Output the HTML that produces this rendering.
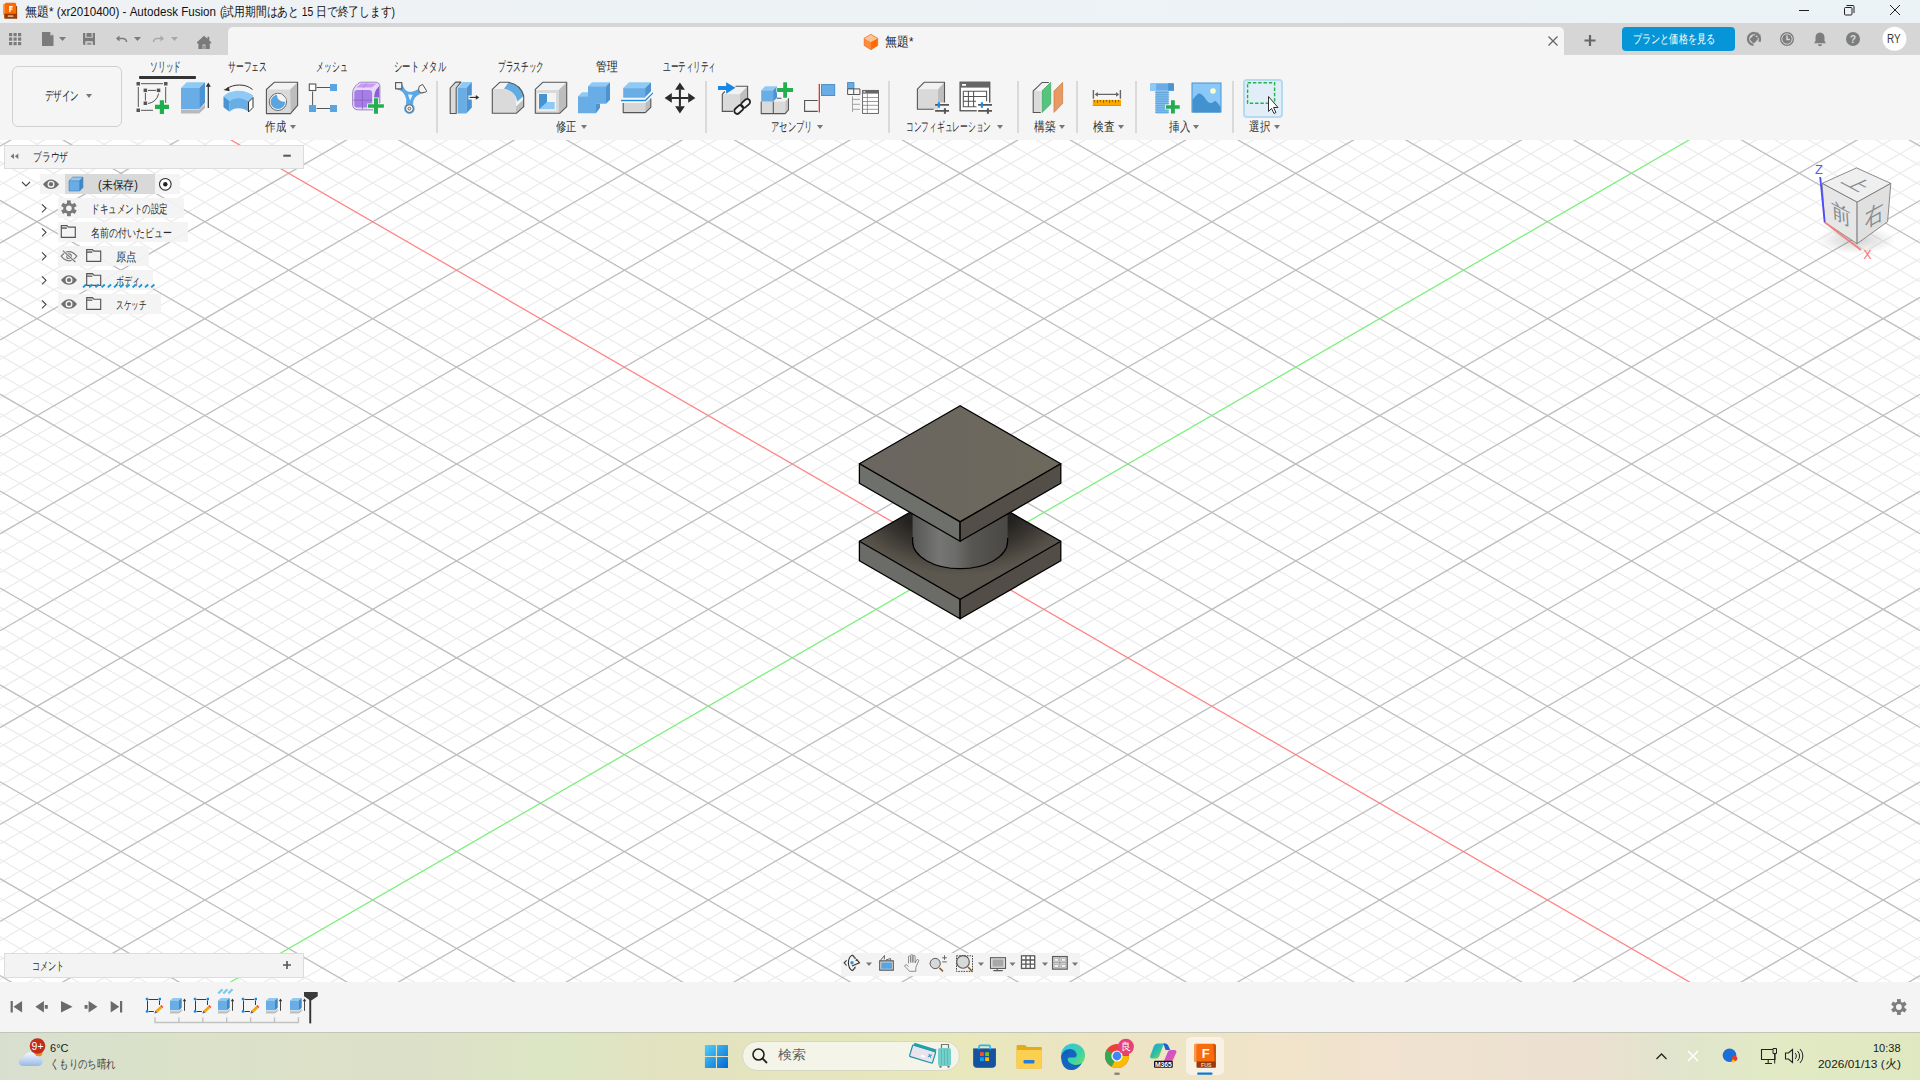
<!DOCTYPE html>
<html><head><meta charset="utf-8">
<style>
*{box-sizing:border-box;margin:0;padding:0}
html,body{width:1920px;height:1080px;overflow:hidden;background:#fff;font-family:"Liberation Sans",sans-serif;color:#3c3c3c}
.a{position:absolute}
.t{position:absolute;white-space:nowrap;font-size:12px;line-height:14px;transform-origin:0 50%}
svg{position:absolute;overflow:visible}
#title{left:0;top:0;width:1920px;height:23px;background:linear-gradient(90deg,#eff2f5,#ebf3f6)}
#qab{left:0;top:23px;width:1920px;height:32px;background:#d6d6d6}
#doctab{left:228px;top:27px;width:1336px;height:28px;background:#f5f5f5;border-radius:5px 5px 0 0}
#toolbar{left:0;top:55px;width:1920px;height:85px;background:#f5f5f5}
#viewport{left:0;top:140px;width:1920px;height:842px;background:#fff;overflow:hidden}
#timeline{left:0;top:982px;width:1920px;height:50px;background:#f4f4f4}
#taskbar{left:0;top:1032px;width:1920px;height:48px;background:linear-gradient(90deg,#d8dfcf 0%,#dbe2c8 10%,#dde0c8 22%,#dce6c4 29%,#e2e2c0 34%,#e8e8bc 50%,#ece4c4 58%,#f0e4c8 65%,#f0e2d0 73%,#ebe0d0 83%,#e0e5cc 87.5%,#e2eac4 93%,#dfe8c0 100%);border-top:1px solid #c3c6b6}
.sep{position:absolute;top:81px;width:2px;height:52px;background:#dadada}
.tri{position:absolute;width:0;height:0;border-left:3px solid transparent;border-right:3px solid transparent;border-top:4px solid #777}
</style></head><body>
<!-- TITLE BAR -->
<div id="title" class="a">
  <svg style="left:0;top:0" width="24" height="23">
    <path d="M3 5a1.2 1.2 0 0 1 1.2-1.2H5v11H3z" fill="#ff9447"/>
    <path d="M16 5.8h0.3a0.8 0.8 0 0 1 0.8 0.8V18.7H16z" fill="#a64606"/>
    <path d="M4.9 4a1.2 1.2 0 0 1 1.2-1.2h8.7a1.2 1.2 0 0 1 1.2 1.2v9.9H4.9z" fill="#ff6a00"/>
    <path d="M4.2 13.8h12.9v4a0.9 0.9 0 0 1-0.9 0.9H5.1a0.9 0.9 0 0 1-0.9-0.9z" fill="#983c06"/>
    <path d="M9.2 12V6.1h3.6v1.3h-2.2v1.1h1.9v1.2h-1.9V12z" fill="#fff"/>
    <rect x="7.8" y="15.3" width="5.6" height="1.8" rx="0.6" fill="#d9a88a"/>
  </svg>
  <div class="t" style="left:25px;top:4.5px;color:#111;font-size:12.5px;transform:scaleX(0.9273)">無題* (xr2010400) - Autodesk Fusion</div>
  <div class="t" style="left:220px;top:4.5px;color:#111;font-size:12.5px;transform:scaleX(0.8286)">(試用期間はあと 15 日で終了します)</div>
  <svg style="left:1790px;top:0" width="130" height="23">
    <line x1="1799" y1="10.5" x2="1809" y2="10.5" stroke="#222" stroke-width="1" transform="translate(-1790,0)"/>
    <g transform="translate(-1790,0)" fill="none" stroke="#222" stroke-width="1">
      <rect x="1844.5" y="7.5" width="7.5" height="7.5" rx="1"/>
      <path d="M1846.5 5.5h6.5a1 1 0 0 1 1 1v6.5"/>
      <path d="M1890 5L1900 15M1900 5L1890 15"/>
    </g>
  </svg>
</div>
<!-- QUICK ACCESS BAR -->
<div id="qab" class="a"></div>
<svg style="left:0;top:0" width="230" height="56">
  <g fill="#7b7b7b">
    <rect x="9" y="33" width="3.2" height="3.2"/><rect x="13.5" y="33" width="3.2" height="3.2"/><rect x="18" y="33" width="3.2" height="3.2"/>
    <rect x="9" y="37.5" width="3.2" height="3.2"/><rect x="13.5" y="37.5" width="3.2" height="3.2"/><rect x="18" y="37.5" width="3.2" height="3.2"/>
    <rect x="9" y="42" width="3.2" height="3.2"/><rect x="13.5" y="42" width="3.2" height="3.2"/><rect x="18" y="42" width="3.2" height="3.2"/>
    <path d="M42 32h8l3.5 3.5V46H42z"/><path d="M50.3 32.3v2.9h2.9z" fill="#d6d6d6"/>
    <path d="M59 37h7l-3.5 4z"/>
    <path d="M83 33h12v12H84l-1-1z M85.2 33v4.8h7.6V33z M85.3 41.2v3.8h7.5v-3.8z" fill-rule="evenodd"/><rect x="85.2" y="33" width="7.6" height="4.8" fill="#b8b8b8"/><rect x="86.8" y="33" width="4.6" height="3.8" fill="#7b7b7b"/><rect x="85.6" y="41.4" width="7" height="3.6" rx="1" fill="#c4c4c4"/><rect x="87.5" y="43" width="3.5" height="1.6" fill="#8a8a8a"/>
    <path d="M134 37h7l-3.5 4z"/>
  </g>
  <g fill="none" stroke="#7b7b7b" stroke-width="1.6">
    <path d="M117 38.5h6a3.5 3.5 0 0 1 3.5 3.5"/>
  </g>
  <path d="M116 38.5l3.5-3v6z" fill="#7b7b7b"/>
  <g fill="none" stroke="#a8a8a8" stroke-width="1.6">
    <path d="M163 38.5h-6a3.5 3.5 0 0 0-3.5 3.5"/>
  </g>
  <path d="M164 38.5l-3.5-3v6z" fill="#a8a8a8"/>
  <path d="M171 37h7l-3.5 4z" fill="#a8a8a8"/>
  <path d="M204 35.8l3.5 3v-2h1.8v3.6l2.2 2.1-0.8 1h-0.9V49h-11.4v-5.5h-0.9l-0.8-1z M202.6 49v-4.6h2.8V49z" fill="#7b7b7b" fill-rule="evenodd"/><rect x="203.2" y="45.5" width="1.6" height="3.5" fill="#8a8a8a"/>
</svg>
<div id="doctab" class="a"></div>
<svg style="left:0;top:0" width="900" height="56">
  <path d="M864.2 38.2L870.9 34.3L877.7 38.2L871 42Z" fill="#fdc394"/>
  <path d="M864.2 38.2L871 42V49.7L864.2 45.6Z" fill="#ff8a3a"/>
  <path d="M871 42L877.7 38.2V45.6L871 49.7Z" fill="#ff6b00"/>
  <path d="M864.2 38.2L870.9 34.3L877.7 38.2V45.6L871 49.7L864.2 45.6Z" fill="none" stroke="#e86a1e" stroke-width="0.7"/>
</svg>
<div class="t" style="left:884.5px;top:35px;color:#222;font-size:12.5px;transform:scaleX(0.9231)">無題*</div>
<svg style="left:0;top:0" width="1920" height="56">
  <path d="M1548.5 36.5l9 9M1557.5 36.5l-9 9" stroke="#666" stroke-width="1.3" fill="none"/>
  <path d="M1590 35v11M1584.5 40.5h11" stroke="#666" stroke-width="2.2" fill="none"/>
  <rect x="1622" y="27" width="113" height="24" rx="4" fill="#0696d7"/>
  <circle cx="1754" cy="39" r="6" fill="none" stroke="#7d7d7d" stroke-width="2.3" stroke-dasharray="30 8" transform="rotate(95 1754 39)"/>
  <g transform="rotate(45 1754 39)" fill="#7d7d7d"><rect x="1751" y="36" width="6" height="6.5" rx="1"/><rect x="1751.8" y="31.5" width="1.5" height="4.5"/><rect x="1754.7" y="31.5" width="1.5" height="4.5"/></g>
  <g fill="#7d7d7d">
    <circle cx="1787" cy="39" r="7"/>
    <path d="M1820 32.5c-3 0-4.5 2.2-4.5 5v3.5l-1.5 2.2h12l-1.5-2.2v-3.5c0-2.8-1.5-5-4.5-5z M1818 44.3h4a2 2 0 0 1-4 0z"/>
    <circle cx="1853" cy="39" r="7"/>
  </g>
    <circle cx="1787" cy="39" r="5.2" fill="none" stroke="#d6d6d6" stroke-width="1"/>
  <path d="M1787 35.5v4h3" stroke="#d6d6d6" stroke-width="1.5" fill="none"/>
  <text x="1853" y="43" font-size="10.5" font-weight="bold" fill="#d6d6d6" text-anchor="middle" font-family="Liberation Sans">?</text>
  <circle cx="1894.5" cy="38.7" r="12" fill="#fff"/>
</svg>
<div class="t" style="left:1633px;top:32px;color:#fff;transform:scaleX(0.7593)">プランと価格を見る</div>
<div class="t" style="left:1886.6px;top:32.2px;color:#3a3a3a;font-size:12px;transform:scaleX(0.8266)">RY</div>
<!-- TOOLBAR -->
<div id="toolbar" class="a"></div>
<div class="a" style="left:12px;top:65.5px;width:109.5px;height:61px;border:1.5px solid #d0d0d0;border-radius:6px"></div>
<div class="t" style="left:45px;top:88.5px;color:#1e1e1e;font-size:12.5px;transform:scaleX(0.6538)">デザイン</div>
<div class="tri" style="left:86px;top:94px"></div>
<!-- tab labels -->
<div class="t" style="left:150px;top:59.8px;color:#262626;font-size:12.5px;transform:scaleX(0.5962)">ソリッド</div>
<div class="t" style="left:228px;top:59.8px;color:#262626;font-size:12.5px;transform:scaleX(0.6000)">サーフェス</div>
<div class="t" style="left:315.5px;top:59.8px;color:#262626;font-size:12.5px;transform:scaleX(0.6058)">メッシュ</div>
<div class="t" style="left:394px;top:59.8px;color:#262626;font-size:12.5px;transform:scaleX(0.6382)">シート メタル</div>
<div class="t" style="left:497.5px;top:59.8px;color:#262626;font-size:12.5px;transform:scaleX(0.5897)">プラスチック</div>
<div class="t" style="left:595.5px;top:59.8px;color:#262626;font-size:12.5px;transform:scaleX(0.8269)">管理</div>
<div class="t" style="left:663px;top:59.8px;color:#262626;font-size:12.5px;transform:scaleX(0.5824)">ユーティリティ</div>
<div class="a" style="left:138.5px;top:75.5px;width:57px;height:3px;background:#333;border-radius:1px"></div>
<!-- group labels -->
<div class="t" style="left:264.5px;top:119.5px;color:#333;font-size:12.5px;transform:scaleX(0.8077)">作成</div>
<div class="tri" style="left:289.5px;top:125px"></div>
<div class="t" style="left:555.5px;top:119.5px;color:#333;font-size:12.5px;transform:scaleX(0.7885)">修正</div>
<div class="tri" style="left:580.5px;top:125px"></div>
<div class="t" style="left:771px;top:119.5px;color:#333;font-size:12.5px;transform:scaleX(0.6385)">アセンブリ</div>
<div class="tri" style="left:816.5px;top:125px"></div>
<div class="t" style="left:906px;top:119.5px;color:#333;font-size:12.5px;transform:scaleX(0.5944)">コンフィギュレーション</div>
<div class="tri" style="left:997px;top:125px"></div>
<div class="t" style="left:1033.5px;top:119.5px;color:#333;font-size:12.5px;transform:scaleX(0.8269)">構築</div>
<div class="tri" style="left:1059px;top:125px"></div>
<div class="t" style="left:1092.5px;top:119.5px;color:#333;font-size:12.5px;transform:scaleX(0.8269)">検査</div>
<div class="tri" style="left:1117.5px;top:125px"></div>
<div class="t" style="left:1168.5px;top:119.5px;color:#333;font-size:12.5px;transform:scaleX(0.8077)">挿入</div>
<div class="tri" style="left:1192.5px;top:125px"></div>
<div class="t" style="left:1248.5px;top:119.5px;color:#333;font-size:12.5px;transform:scaleX(0.8077)">選択</div>
<div class="tri" style="left:1273.5px;top:125px"></div>
<div class="sep" style="left:436px"></div>
<div class="sep" style="left:705px"></div>
<div class="sep" style="left:888px"></div>
<div class="sep" style="left:1017px"></div>
<div class="sep" style="left:1076px"></div>
<div class="sep" style="left:1135px"></div>
<div class="sep" style="left:1232px"></div>
<div class="a" style="left:1243px;top:78.5px;width:40px;height:39px;background:#e1eef7;border:2px solid #b5daf1;border-radius:4px"></div>
<svg style="left:0;top:0" width="1920" height="140">
 <defs>
  <linearGradient id="bl" x1="0" y1="0" x2="0" y2="1"><stop offset="0" stop-color="#6cb2e8"/><stop offset="1" stop-color="#5aa5e0"/></linearGradient>
 </defs>
 <!-- sketch -->
 <g fill="#555">
  <rect x="136.5" y="82" width="3.5" height="3.5"/><rect x="164" y="82" width="3.5" height="3.5"/><rect x="136.5" y="108.5" width="3.5" height="3.5"/>
  <rect x="143.6" y="88.6" width="3.5" height="3.5"/><rect x="156.8" y="88.6" width="3.5" height="3.5"/><rect x="143.6" y="101.5" width="3.5" height="3.5"/>
 </g>
 <g stroke="#555" stroke-width="1" fill="none">
  <path d="M141 83.7h22M138.3 87v20M165.7 87v16M141 110.3h12M145.4 93v7.5M148 90.4h8M158.6 93.5a12 12 0 0 1-10.5 10"/>
 </g>
 <path d="M159.8 100.2h4.2v4.55h5v4.2h-5v5h-4.2v-5h-4.8v-4.2h4.8z" fill="#1fae4b"/>
 <!-- extrude -->
 <path d="M181 88l5.6-5.8h18.4L199.2 88z" fill="#8fcaf6"/>
 <path d="M181 88h18.2v21H181z" fill="#68ade6"/>
 <path d="M199.2 88l5.8-5.8v20.5l-5.8 6.3z" fill="#4b93d1"/>
 <path d="M181 109.5h18.2l5.8-5.5v4l-5.8 5.5H181z" fill="#b9b9b9"/>
 <path d="M208.3 84v24" stroke="#333" stroke-width="1.2"/><path d="M208.3 82.5l-2.6 4.2h5.2z" fill="#333"/>
 <!-- revolve -->
 <path d="M223.5 96.5c3-3.5 9-5.7 15-5.7s11.5 2 15 5l-5 8c-2.5-2-6-3-10-3s-7.5 1-10 3z" fill="#8fcaf6"/>
 <path d="M223.5 96.5l6 4.8v10.5l-6-4.5z" fill="#4b93d1"/>
 <path d="M229.5 101.3c2.5-2 6-3 9-3s6.5 1 9.5 3v10c-3-2-6-3-9.5-3s-6.5 1-9 3.5z" fill="#68ade6"/>
 <path d="M248.5 102l4.5-4.5v10l-4.5 4.5z" fill="#fff" stroke="#333" stroke-width="1"/>
 <path d="M252.5 89.5c-3.5-3-8-4.5-13-4.5s-9 1.3-12.5 3.5" stroke="#333" stroke-width="1" fill="none"/>
 <path d="M223.5 90l5.5-3.2 0.5 4.5z" fill="#333"/>
 <!-- hole -->
 <clipPath id="holeclip"><circle cx="277.9" cy="101.9" r="8.2"/></clipPath>
 <path d="M266.4 89.5L274.2 82.3H297.6L290.1 89.5Z" fill="#f3f3f3"/>
 <path d="M266.4 89.5H290.1V113.6H266.4Z" fill="#d9d9d9"/>
 <path d="M290.1 89.5L297.6 82.3V105.4L290.5 113.6Z" fill="#bdbdbd"/>
 <path d="M266.4 89.5L274.2 82.3H297.6V105.4L290.5 113.6H266.4Z" fill="none" stroke="#555" stroke-width="1.1" stroke-linejoin="round"/>
 <circle cx="277.9" cy="101.9" r="8.6" fill="#f4f4f4" stroke="#5a5a5a" stroke-width="0.9"/>
 <g clip-path="url(#holeclip)">
  <circle cx="277.9" cy="101.9" r="7.2" fill="#5aa5e0"/>
  <circle cx="283.6" cy="95.2" r="6.6" fill="#f4f4f4"/>
 </g>
 <!-- rect pattern -->
 <path d="M316.5 87.5h13.5M312.6 91.5v13.5M316.5 108.5h13.5" stroke="#555" stroke-width="1"/>
 <rect x="309.3" y="84" width="6.5" height="6.5" fill="#fff" stroke="#555" stroke-width="1.1"/>
 <rect x="330" y="84" width="7" height="7" fill="#5aa5e0"/>
 <rect x="309" y="105" width="7" height="7" fill="#5aa5e0"/>
 <rect x="330" y="105" width="7" height="7" fill="#5aa5e0"/>
 <!-- form -->
 <path d="M352.6 93Q352.6 89 355.5 86L358 83.5Q359.3 82.2 361.5 82.2H375.5Q379.9 82.2 379.9 87V103L375 109.9H358.5Q352.6 109.9 352.6 104Z" fill="#e6d9fb" stroke="#7d5fa8" stroke-width="0.7"/>
 <path d="M356.5 87.6L360.8 83.4H376.8L371.8 87.6Z" fill="#c89cf6"/>
 <path d="M366.8 83.4L363.2 87.6" stroke="#9b78cf" stroke-width="0.7"/>
 <path d="M374.2 96.5Q374.2 92 376.5 89.2L379.2 86V103L377 105.8H374.2Z" fill="#8b5fd0"/>
 <rect x="354.3" y="89.9" width="17.8" height="17.7" rx="3.2" fill="#a77de6"/>
 <path d="M362.4 89.9V109.5M353.2 100.2H372.1" stroke="#8862c4" stroke-width="0.8"/>
 <path d="M373.9 98.2h4.1v6.1h5.9v3.5h-5.9v5.9h-4.1v-5.9h-5.9v-3.5h5.9z" fill="#fbf7ff" stroke="#fbf7ff" stroke-width="1.6"/><path d="M373.9 98.2h4.1v6.1h5.9v3.5h-5.9v5.9h-4.1v-5.9h-5.9v-3.5h5.9z" fill="#22b04c"/>
 <!-- derive -->
 <path d="M396 89.2Q404.5 90 406.3 99.5L406 105H413Q412.5 97 420.5 93.8L423.5 93.2L420.2 87.5Q417 90.5 410.5 92Q404.5 92 402.2 83.8L401.6 88.6Z" fill="#5aa9e6"/>
 <path d="M408 94.6L412.6 94.8L410.1 100.6Z" fill="#f4f4f4"/>
 <circle cx="409.4" cy="108.6" r="5.3" fill="#5aa9e6"/>
 <circle cx="409.4" cy="108.6" r="3.9" fill="#f4f4f4" stroke="#555" stroke-width="0.9"/>
 <circle cx="409.4" cy="108.6" r="1.4" fill="none" stroke="#555" stroke-width="0.9"/>
 <path d="M419.2 86.3L422.6 84.4L426.6 90.8Q426.8 91.6 426 92L421.5 92.8Q418.5 92.5 418.6 89.2Z" fill="#f4f4f4" stroke="#555" stroke-width="1"/>
 <rect x="395.6" y="82.6" width="6.2" height="6.2" fill="#f4f4f4" stroke="#555" stroke-width="1.1"/>
 <!-- press pull -->
 <path d="M450.2 88L455.6 82.1H461L456.2 88V113.5H450.2Z" fill="#dadada" stroke="#555" stroke-width="1.1" stroke-linejoin="round"/>
 <path d="M457.6 88L462.8 82.1H471.8L466.4 88Z" fill="#8fcaf6"/>
 <path d="M457.6 88H466.4V113.5H457.6Z" fill="#68ade6"/>
 <path d="M466.4 88L471.8 82.1V107.5L466.4 113.5Z" fill="#4b93d1"/>
 <rect x="468.5" y="95.5" width="6" height="4" fill="#fff"/>
 <path d="M469.5 97.4h7" stroke="#333" stroke-width="1.2"/><path d="M479.3 97.4l-3.5-2.3v4.6z" fill="#333"/>
 <!-- fillet -->
 <path d="M492.3 89.3L499.7 82.3H508.7L504 88.7H492.3Z" fill="#f3f3f3"/>
 <path d="M492.3 89H504Q516 90 516 102.5V113.3H492.3Z" fill="#dadada"/>
 <path d="M516 106.5L523.7 99.5V106.7L516.3 113.3H516Z" fill="#c0c0c0"/>
 <path d="M508.7 82.3Q521 85 523.7 96L517.3 101.5Q515.5 91 504 88.7Z" fill="#62ace4"/>
 <path d="M492.3 89.3L499.7 82.3H508.7Q521 85 523.7 96V106.7L516.3 113.3H492.3Z" fill="none" stroke="#555" stroke-width="1.1" stroke-linejoin="round"/>
 <!-- shell -->
 <path d="M535.3 89.3L542.7 82.3H566.7L558.7 90Z" fill="#f2f2f2"/>
 <path d="M535.3 90H558.7V113.3H535.3Z" fill="#d9d9d9"/>
 <path d="M558.7 90L566.7 82.3V106.7L559.7 113.3H558.7Z" fill="#bdbdbd"/>
 <path d="M535.3 89.3L542.7 82.3H566.7V106.7L559.7 113.3H535.3Z" fill="none" stroke="#555" stroke-width="1.1" stroke-linejoin="round"/>
 <rect x="537.3" y="93" width="18.7" height="17.7" fill="#f4f4f4"/>
 <path d="M539 94H547V102H554.7V109.3H539Z" fill="#8fcaf6"/>
 <path d="M539 94H547V102L539 109.3Z" fill="#4593d0"/>
 <!-- combine -->
 <path d="M588 86.3L592 82.3H610L606 86.3Z" fill="#8fcaf6"/>
 <path d="M588 86.3H606V103.7H596V104.3H588Z" fill="#68ade6"/>
 <path d="M606 86.3L610 82.3V99.7L606 103.7Z" fill="#4b93d1"/>
 <path d="M578 96.3L582 92.3H588V96.3Z" fill="#8fcaf6"/>
 <path d="M578 96.3H588V103.7H596V113.3H578Z" fill="#68ade6"/>
 <path d="M596 103.7H600V107.7L596 113.3Z" fill="#4b93d1"/>
 <!-- split -->
 <path d="M623.2 88.1L629.1 82.2H651L645.1 88.1Z" fill="#8fcaf6"/>
 <path d="M623.2 88.1H645.1V97.7H623.2Z" fill="#68ade6"/>
 <path d="M645.1 88.1L651 82.2V91.2L644.5 97.7H645.1Z" fill="#4b93d1"/>
 <path d="M621 100.5H645.3L653 92.9" fill="none" stroke="#fff" stroke-width="2.6"/>
 <path d="M621 100.5H645.3L653 92.9" fill="none" stroke="#1e8ae0" stroke-width="1.3"/>
 <path d="M623.2 103H645.3V112.6H623.2Z" fill="#d6d6d6"/>
 <path d="M645.3 103L650.8 98.6V107.3L645.3 112.6Z" fill="#bcbcbc"/>
 <path d="M623.2 103V112.6H645.3L650.8 107.3V98.6" fill="none" stroke="#555" stroke-width="1.1" stroke-linejoin="round"/>
 <!-- move -->
 <path d="M679.9 89.5V106.6M671.5 97.9H688.5" stroke="#2b2b2b" stroke-width="2"/>
 <path d="M675.1 89.8L679.9 82.4L684.9 89.8Z M675.1 106.2L679.9 113.4L684.9 106.2Z M664.6 97.9L671.8 93.1V102.7Z M695.4 97.9L688.2 93.1V102.7Z" fill="#2b2b2b"/>
 <!-- assembly: new component -->
 <path d="M722.3 94.1L727 89.5H735.5L740 94.1Z M735.5 86.3H747.6L740 94.1H733Z" fill="#f2f2f2"/>
 <path d="M722.3 94.1H740V111.4H722.3Z" fill="#dadada"/>
 <path d="M740 94.1L747.6 86.3V99L740 107Z" fill="#bfbfbf"/>
 <path d="M724.8 91.5L722.3 94.1V111.4H733M735.5 86.3H747.6V99" fill="none" stroke="#555" stroke-width="1.1"/>
 <path d="M718 86.1H726.1V82.3L735.5 87.8L726.1 93.7V89.9H718Z" fill="#1888e4"/>
 <g transform="translate(742.2 106.4) rotate(-42)">
  <rect x="-10.3" y="-3.6" width="11.5" height="7.2" rx="3.6" fill="#f4f4f4"/>
  <rect x="-1.2" y="-3.6" width="11.5" height="7.2" rx="3.6" fill="#f4f4f4"/>
  <rect x="-9.6" y="-2.9" width="10.1" height="5.8" rx="2.9" fill="none" stroke="#222" stroke-width="1.8"/>
  <rect x="-0.5" y="-2.9" width="10.1" height="5.8" rx="2.9" fill="none" stroke="#222" stroke-width="1.8"/>
 </g>
 <!-- joint -->
 <path d="M773.3 101.5L777 98.2H785.2V101.5Z" fill="#f2f2f2"/>
 <path d="M761.2 101.5H785.2V113.6H761.2Z" fill="#dadada"/>
 <path d="M785.2 101.5L788.5 98.2V109.8L785.2 113.6Z" fill="#c3c3c3"/>
 <path d="M761.2 101.5V113.6H785.2L788.5 109.8V98.2M773.3 101.5V113.6M777 98.2H781.5" fill="none" stroke="#555" stroke-width="1.05"/>
 <path d="M761.2 90.3L765 86.3H777L773.1 90.3Z" fill="#8fcaf6"/>
 <path d="M761.2 90.3H773.1V101.5H761.2Z" fill="#68ade6"/>
 <path d="M773.1 90.3L777 86.3V97.7L773.1 101.5Z" fill="#4b93d1"/>
 <path d="M783.2 82.3h3.8v5.8h6v3.8h-6v5.8h-3.8v-5.8h-6.1v-3.8h6.1z" fill="#fbfbfb" stroke="#fbfbfb" stroke-width="1.4"/>
 <path d="M783.2 82.3h3.8v5.8h6v3.8h-6v5.8h-3.8v-5.8h-6.1v-3.8h6.1z" fill="#22b04c"/>
 <!-- as-built -->
 <path d="M817.8 100.5H804.6V111.4H817.8" fill="none" stroke="#555" stroke-width="1.1"/>
 <path d="M819.3 84.3v27.7" stroke="#d62828" stroke-width="1.2" stroke-linecap="round"/>
 <rect x="821.5" y="84.6" width="13.2" height="10.9" fill="#68ade6" stroke="#4088c8" stroke-width="0.9"/>
 <!-- motion table -->
 <rect x="847.6" y="82.6" width="6.3" height="5.9" fill="#68ade6" stroke="#4088c8" stroke-width="0.9"/>
 <path d="M847.6 88.9h12.3v5.6h-12.3z M853.7 88.9v5.6" fill="none" stroke="#555" stroke-width="1"/>
 <path d="M852.5 96.3v15.7M852.5 99.4h7.5M852.5 104.3h7.5M852.5 109.3h7.5" stroke="#9a9a9a" stroke-width="0.9"/>
 <rect x="862.6" y="90.4" width="15.9" height="23" fill="#fff" stroke="#5a5a5a" stroke-width="0.9"/>
 <rect x="862.6" y="90.2" width="15.9" height="3.4" fill="#666"/>
 <rect x="863.4" y="91.3" width="2" height="1.1" fill="#fff"/>
 <path d="M862.6 97.5h15.9M862.6 101.5h15.9M862.6 105.3h15.9M862.6 109.3h15.9M867.4 93.6v19.8" stroke="#7a7a7a" stroke-width="0.75"/>
 <!-- configuration -->
 <path d="M917.4 89.2L924.1 82.3H944.5L938 89.2Z" fill="#f2f2f2"/>
 <path d="M917.4 89.2H938V109.3H917.4Z" fill="#d9d9d9"/>
 <path d="M938 89.2L944.5 82.3V102.6H938Z" fill="#bebebe"/>
 <path d="M933.7 109.3H917.4V89.2L924.1 82.3H944.5V102.6" fill="none" stroke="#555" stroke-width="1.1" stroke-linejoin="round"/>
 <path d="M935.1 104.9h13.9M935.1 110.9h13.9" stroke="#555" stroke-width="1.8"/>
 <path d="M938.9 102.2v5.6" stroke="#1a8be6" stroke-width="2.1"/>
 <path d="M944.9 108.2v5.6" stroke="#555" stroke-width="2"/>
 <path d="M976.7 110.7H960.2V82.3H989.7V102.6" fill="none" stroke="#555" stroke-width="1.05"/>
 <rect x="960.7" y="82.8" width="28.5" height="27.4" fill="#fff"/>
 <path d="M976.7 110.7H960.2V82.3H989.7V102.6" fill="none" stroke="#555" stroke-width="1.05"/>
 <rect x="960.2" y="82.3" width="29.5" height="5.3" fill="#666"/>
 <rect x="962" y="84" width="4" height="1.8" fill="#fff"/>
 <path d="M963.3 91.2H986.6V101.3M963.3 91.2V106.7H976.5M963.3 96.4H986.6M963.3 101.3H976M968.4 91.2V106.7M973.6 91.2V106.7" fill="none" stroke="#555" stroke-width="1.05"/>
 <path d="M978.1 104.9h13.9M978.1 110.9h13.9" stroke="#555" stroke-width="1.8"/>
 <path d="M981.9 102.2v5.6" stroke="#1a8be6" stroke-width="2.1"/>
 <path d="M987.9 108.2v5.6" stroke="#555" stroke-width="2"/>
 <!-- construct -->
 <path d="M1033.2 91L1042.1 82.4H1048.8L1042.1 90.8Z" fill="#f4f4f4"/>
 <path d="M1033.2 91H1040.8V112.4H1033.2Z" fill="#dadada"/>
 <path d="M1040.8 112.4H1033.2V91L1042.1 82.4H1048.8" fill="none" stroke="#555" stroke-width="1.05"/>
 <path d="M1042.1 90.8L1050.7 82.4V104L1042.1 112.4Z" fill="#55c57e" stroke="#3aa35c" stroke-width="0.7" stroke-linejoin="round"/>
 <path d="M1054 91L1062.6 82.4V103.5L1054 112.4Z" fill="#e89a62" stroke="#c97a42" stroke-width="0.7" stroke-linejoin="round"/>
 <!-- inspect -->
 <path d="M1093.4 90V98.8M1120.4 90V98.8M1096 94.4H1117.8" stroke="#666" stroke-width="1.4"/>
 <path d="M1094.7 94.4L1097.8 92.1V96.75Z M1119.1 94.4L1116 92.1V96.75Z" fill="#666"/>
 <rect x="1092.8" y="99.9" width="28.2" height="6" fill="#f9a800"/>
 <rect x="1092.8" y="105" width="28.2" height="0.9" fill="#e39400"/>
 <path d="M1094.4 100v1.9M1097.5 100v2.9M1100.4 100v1.9M1103.5 100v2.9M1106.4 100v1.9M1109.5 100v2.9M1112.4 100v1.9M1115.5 100v2.9M1118.6 100v1.9" stroke="#7a5a20" stroke-width="0.9"/>
 <!-- insert: bolt -->
 <path d="M1150.1 84.5q0-1.3 1.3-1.3h21.3q1.3 0 1.3 1.3v6.3h-23.9z" fill="#68ade6"/>
 <path d="M1150.1 84.5q0-1.3 1.3-1.3h4.7v7.6h-6z" fill="#8fcaf6"/>
 <path d="M1168.2 83.2h4.5q1.3 0 1.3 1.3v6.3h-5.8z" fill="#4b93d1"/>
 <path d="M1155.6 90.8h13v21.5q0 1.3-1.3 1.3h-10.4q-1.3 0-1.3-1.3z" fill="#7fbdec"/>
 <path d="M1155 92.5h14.1M1155 94.7h14.1M1155 96.9h14.1M1155 99.1h14.1M1155 101.3h14.1M1155 103.5h14.1M1155 105.7h14.1M1155 107.9h14.1M1155 110.1h14.1M1155 112.3h14.1" stroke="#5d9fd6" stroke-width="0.8"/>
 <path d="M1171 100.3h3.8v5h4.9v3.4h-4.9v4.9h-3.8v-4.9h-5v-3.4h5z" fill="#f5f5f5" stroke="#f5f5f5" stroke-width="1.6"/>
 <path d="M1171 100.3h3.8v5h4.9v3.4h-4.9v4.9h-3.8v-4.9h-5v-3.4h5z" fill="#1fae4b"/>
 <!-- insert: image -->
 <rect x="1192" y="83" width="29" height="29" fill="#8ac8f7" stroke="#4a94cf" stroke-width="1"/>
 <path d="M1192.5 100c3-4 5-6.5 7-6.5s4 2.5 6.5 6 4 3.5 5.5 3.5 2-2 3.5-2 3 2.5 5.5 6v5.5h-28z" fill="#4192cf"/>
 <circle cx="1213" cy="91" r="2.8" fill="#fdfbcf"/>
 <!-- select -->
 <rect x="1247.6" y="82.7" width="27" height="20.5" fill="none" stroke="#22b14c" stroke-width="1.4" stroke-dasharray="3.4 1.9"/>
 <path d="M1268.5 96.5v15l3-3 2.5 5 2-1-2.5-5h4.5z" fill="#fff" stroke="#333" stroke-width="1"/>
</svg>
<!-- VIEWPORT -->
<div id="viewport" class="a">
<svg width="1920" height="842" viewBox="0 140 1920 842" style="left:0;top:0">
 <defs>
  <radialGradient id="bpg" gradientUnits="userSpaceOnUse" cx="960" cy="503" r="120" gradientTransform="translate(960 503) scale(1 0.6) translate(-960 -503)">
   <stop offset="0.5" stop-color="#242220"/><stop offset="0.68" stop-color="#383531"/><stop offset="0.88" stop-color="#524d45"/><stop offset="1" stop-color="#5d584f"/>
  </radialGradient>
  <linearGradient id="cyl" gradientUnits="userSpaceOnUse" x1="912.6" y1="0" x2="1007.6" y2="0">
   <stop offset="0" stop-color="#565754"/><stop offset="0.28" stop-color="#767774"/><stop offset="0.45" stop-color="#6c6d6a"/><stop offset="0.62" stop-color="#585652"/><stop offset="1" stop-color="#4a4844"/>
  </linearGradient>
  <linearGradient id="tpg" gradientUnits="userSpaceOnUse" x1="860" y1="0" x2="1060" y2="0">
   <stop offset="0" stop-color="#6a6660"/><stop offset="1" stop-color="#6d695c"/>
  </linearGradient>
  <radialGradient id="cubeshadow" cx="0.5" cy="0.5" r="0.5"><stop offset="0" stop-color="#000" stop-opacity="0.18"/><stop offset="1" stop-color="#000" stop-opacity="0"/></radialGradient>
 </defs>
 <path d="M0 -943.03L1920 165.48M0 -923.65L1920 184.86M0 -904.27L1920 204.24M0 -884.89L1920 223.62M0 -846.13L1920 262.38M0 -826.75L1920 281.76M0 -807.37L1920 301.14M0 -787.99L1920 320.52M0 -749.23L1920 359.28M0 -729.85L1920 378.66M0 -710.47L1920 398.04M0 -691.09L1920 417.42M0 -652.33L1920 456.18M0 -632.95L1920 475.56M0 -613.57L1920 494.94M0 -594.19L1920 514.32M0 -555.43L1920 553.08M0 -536.05L1920 572.46M0 -516.67L1920 591.84M0 -497.29L1920 611.22M0 -458.53L1920 649.98M0 -439.15L1920 669.36M0 -419.77L1920 688.74M0 -400.39L1920 708.12M0 -361.63L1920 746.88M0 -342.25L1920 766.26M0 -322.87L1920 785.64M0 -303.49L1920 805.02M0 -264.73L1920 843.78M0 -245.35L1920 863.16M0 -225.97L1920 882.54M0 -206.59L1920 901.92M0 -167.83L1920 940.68M0 -148.45L1920 960.06M0 -129.07L1920 979.44M0 -109.69L1920 998.82M0 -70.93L1920 1037.58M0 -51.55L1920 1056.96M0 -32.17L1920 1076.34M0 -12.79L1920 1095.72M0 25.97L1920 1134.48M0 45.35L1920 1153.86M0 64.73L1920 1173.24M0 84.11L1920 1192.62M0 122.87L1920 1231.38M0 142.25L1920 1250.76M0 161.63L1920 1270.14M0 181.01L1920 1289.52M0 219.77L1920 1328.28M0 239.15L1920 1347.66M0 258.53L1920 1367.04M0 277.91L1920 1386.42M0 316.67L1920 1425.18M0 336.05L1920 1444.56M0 355.43L1920 1463.94M0 374.81L1920 1483.32M0 413.57L1920 1522.08M0 432.95L1920 1541.46M0 452.33L1920 1560.84M0 471.71L1920 1580.22M0 510.47L1920 1618.98M0 529.85L1920 1638.36M0 549.23L1920 1657.74M0 568.61L1920 1677.12M0 607.37L1920 1715.88M0 626.75L1920 1735.26M0 646.13L1920 1754.64M0 665.51L1920 1774.02M0 704.27L1920 1812.78M0 723.65L1920 1832.16M0 743.03L1920 1851.54M0 762.41L1920 1870.92M0 801.17L1920 1909.68M0 820.55L1920 1929.06M0 839.93L1920 1948.44M0 859.31L1920 1967.82M0 898.07L1920 2006.58M0 917.45L1920 2025.96M0 936.83L1920 2045.34M0 956.21L1920 2064.72" stroke="#ececec" stroke-width="1.3" fill="none"/>
 <path d="M0 165.59L1920 -942.92M0 184.97L1920 -923.54M0 204.35L1920 -904.16M0 223.73L1920 -884.78M0 262.49L1920 -846.02M0 281.87L1920 -826.64M0 301.25L1920 -807.26M0 320.63L1920 -787.88M0 359.39L1920 -749.12M0 378.77L1920 -729.74M0 398.15L1920 -710.36M0 417.53L1920 -690.98M0 456.29L1920 -652.22M0 475.67L1920 -632.84M0 495.05L1920 -613.46M0 514.43L1920 -594.08M0 553.19L1920 -555.32M0 572.57L1920 -535.94M0 591.95L1920 -516.56M0 611.33L1920 -497.18M0 650.09L1920 -458.42M0 669.47L1920 -439.04M0 688.85L1920 -419.66M0 708.23L1920 -400.28M0 746.99L1920 -361.52M0 766.37L1920 -342.14M0 785.75L1920 -322.76M0 805.13L1920 -303.38M0 843.89L1920 -264.62M0 863.27L1920 -245.24M0 882.65L1920 -225.86M0 902.03L1920 -206.48M0 940.79L1920 -167.72M0 960.17L1920 -148.34M0 979.55L1920 -128.96M0 998.93L1920 -109.58M0 1037.69L1920 -70.82M0 1057.07L1920 -51.44M0 1076.45L1920 -32.06M0 1095.83L1920 -12.68M0 1134.59L1920 26.08M0 1153.97L1920 45.46M0 1173.35L1920 64.84M0 1192.73L1920 84.22M0 1231.49L1920 122.98M0 1250.87L1920 142.36M0 1270.25L1920 161.74M0 1289.63L1920 181.12M0 1328.39L1920 219.88M0 1347.77L1920 239.26M0 1367.15L1920 258.64M0 1386.53L1920 278.02M0 1425.29L1920 316.78M0 1444.67L1920 336.16M0 1464.05L1920 355.54M0 1483.43L1920 374.92M0 1522.19L1920 413.68M0 1541.57L1920 433.06M0 1560.95L1920 452.44M0 1580.33L1920 471.82M0 1619.09L1920 510.58M0 1638.47L1920 529.96M0 1657.85L1920 549.34M0 1677.23L1920 568.72M0 1715.99L1920 607.48M0 1735.37L1920 626.86M0 1754.75L1920 646.24M0 1774.13L1920 665.62M0 1812.89L1920 704.38M0 1832.27L1920 723.76M0 1851.65L1920 743.14M0 1871.03L1920 762.52M0 1909.79L1920 801.28M0 1929.17L1920 820.66M0 1948.55L1920 840.04M0 1967.93L1920 859.42M0 2006.69L1920 898.18M0 2026.07L1920 917.56M0 2045.45L1920 936.94M0 2064.83L1920 956.32" stroke="#ececec" stroke-width="1.3" fill="none"/>
 <path d="M0 -962.41L1920 146.10M0 -865.51L1920 243.00M0 -768.61L1920 339.90M0 -671.71L1920 436.80M0 -574.81L1920 533.70M0 -477.91L1920 630.60M0 -381.01L1920 727.50M0 -284.11L1920 824.40M0 -187.21L1920 921.30M0 -90.31L1920 1018.20M0 103.49L1920 1212.00M0 200.39L1920 1308.90M0 297.29L1920 1405.80M0 394.19L1920 1502.70M0 491.09L1920 1599.60M0 587.99L1920 1696.50M0 684.89L1920 1793.40M0 781.79L1920 1890.30M0 878.69L1920 1987.20M0 975.59L1920 2084.10" stroke="#bfbfbf" stroke-width="1.35" fill="none"/>
 <path d="M0 146.21L1920 -962.30M0 243.11L1920 -865.40M0 340.01L1920 -768.50M0 436.91L1920 -671.60M0 533.81L1920 -574.70M0 630.71L1920 -477.80M0 727.61L1920 -380.90M0 824.51L1920 -284.00M0 921.41L1920 -187.10M0 1018.31L1920 -90.20M0 1212.11L1920 103.60M0 1309.01L1920 200.50M0 1405.91L1920 297.40M0 1502.81L1920 394.30M0 1599.71L1920 491.20M0 1696.61L1920 588.10M0 1793.51L1920 685.00M0 1890.41L1920 781.90M0 1987.31L1920 878.80M0 2084.21L1920 975.70" stroke="#bfbfbf" stroke-width="1.35" fill="none"/>
 <path d="M0 6.6L1920 1115.1" stroke="#ff8585" stroke-width="1.3" fill="none"/>
 <path d="M0 1115.2L1920 6.6" stroke="#7def7d" stroke-width="1.3" fill="none"/>
 <!-- MODEL -->
 <g stroke="#000" stroke-width="1.3" stroke-linejoin="round">
  <!-- bottom plate -->
  <path d="M859.4 541.3L960.1 483.6L1060.8 541.3L960.1 599.4Z" fill="url(#bpg)" stroke="none"/>
  <path d="M859.4 541.3L960.1 599.4L960.1 618.8L859.4 560.7Z" fill="#6b6c68"/>
  <path d="M960.1 599.4L1060.8 541.3L1060.8 560.7L960.1 618.8Z" fill="#524e47"/>
  <path d="M859.4 541.3L960.1 483.6L1060.8 541.3" fill="none"/>
  <!-- cylinder -->
  <path d="M912.6 480L912.6 541.3A47.5 27.4 0 0 0 1007.6 541.3L1007.6 480Z" fill="url(#cyl)" stroke="none"/>
  <path d="M912.6 537L912.6 541.3A47.5 27.4 0 0 0 1007.6 541.3L1007.6 538" fill="none" stroke-width="1.2"/>
  <!-- top plate -->
  <path d="M859.4 463.8L960.1 405.7L1060.8 463.8L960.1 521.9Z" fill="url(#tpg)"/>
  <path d="M859.4 463.8L960.1 521.9L960.1 541.3L859.4 483.2Z" fill="#6e706c"/>
  <path d="M960.1 521.9L1060.8 463.8L1060.8 483.2L960.1 541.3Z" fill="#534f48"/>
 </g>
 <!-- VIEW CUBE -->
 <ellipse cx="1856" cy="240" rx="40" ry="14" fill="url(#cubeshadow)"/>
 <path d="M1822.1 183.4L1856.5 167.9L1890.8 183.4L1857.1 202.2Z" fill="#efefef" stroke="#707070" stroke-width="0.8"/>
 <path d="M1822.1 183.4L1857.1 202.2L1857.1 243.7L1824.7 222.3Z" fill="#e6e6e6" stroke="#707070" stroke-width="0.8"/>
 <path d="M1857.1 202.2L1890.8 183.4L1887.6 221.7L1857.1 243.7Z" fill="#e0e0e0" stroke="#707070" stroke-width="0.8"/>
 <path d="M1824.7 222.3L1820.2 177" stroke="#4a4aff" stroke-width="1.8"/>
 <path d="M1824.7 222.3L1861 250" stroke="#f28080" stroke-width="1.8"/>
 <text x="1819" y="174" font-size="13" fill="#5a5aff" text-anchor="middle" font-family="Liberation Sans">Z</text>
 <text x="1867.5" y="258.5" font-size="12" fill="#ff6a6a" text-anchor="middle" font-family="Liberation Sans">X</text>
 <text x="18.6" y="26.4" font-size="22" fill="#858b91" text-anchor="middle" font-family="Liberation Sans" transform="matrix(0.875 0.47 -0.86 0.3875 1856.5 167.9)">上</text>
 <text x="20" y="29" font-size="22" fill="#858b91" text-anchor="middle" font-family="Liberation Sans" transform="matrix(0.875 0.47 0.065 0.9725 1822.1 183.4)">前</text>
 <text x="20" y="29" font-size="22" fill="#858b91" text-anchor="middle" font-family="Liberation Sans" transform="matrix(0.8425 -0.47 0 1.0375 1857.1 202.2)">右</text>
</svg>
</div>
<!-- BROWSER PANEL -->
<div class="a" style="left:4px;top:144.5px;width:299.5px;height:24px;background:#f3f3f3;border:1px solid #dcdcdc"></div>
<svg style="left:0;top:0" width="320" height="320">
 <path d="M14 153.5v5.5l-3.5-2.75zM18.3 153.5v5.5l-3.5-2.75z" fill="#777"/>
 <rect x="283.3" y="154.7" width="7.5" height="2" fill="#555"/>
</svg>
<div class="t" style="left:32.5px;top:150px;color:#2a2a2a;transform:scaleX(0.7292)">ブラウザ</div>
<div class="a" style="left:40px;top:174px;width:140px;height:20px;background:rgba(243,243,243,0.92)"></div>
<div class="a" style="left:65px;top:174.2px;width:89.7px;height:19.5px;background:#d9d9d9"></div>
<div class="a" style="left:58px;top:198px;width:126px;height:19.5px;background:rgba(243,243,243,0.92)"></div>
<div class="a" style="left:58px;top:222px;width:129.5px;height:19.5px;background:rgba(243,243,243,0.92)"></div>
<div class="a" style="left:58px;top:246px;width:90.5px;height:19.5px;background:rgba(243,243,243,0.92)"></div>
<div class="a" style="left:58px;top:270px;width:94.5px;height:19.5px;background:rgba(243,243,243,0.92)"></div>
<div class="a" style="left:58px;top:294px;width:103px;height:19.5px;background:rgba(243,243,243,0.92)"></div>
<svg style="left:0;top:0" width="320" height="320">
 <g fill="none" stroke="#444" stroke-width="1.1">
  <path d="M22 182l4 4 4-4"/>
  <path d="M42 204.3l4 4-4 4M42 228.3l4 4-4 4M42 252.3l4 4-4 4M42 276.3l4 4-4 4M42 300.3l4 4-4 4"/>
 </g>
 <!-- eye row1 -->
 <path d="M43 184.2c2.5-3.3 5.2-4.8 8-4.8s5.5 1.5 8 4.8c-2.5 3.3-5.2 4.8-8 4.8s-5.5-1.5-8-4.8z" fill="#6f6f6f"/>
 <circle cx="51" cy="184.2" r="3.5" fill="#f3f3f3"/><circle cx="51" cy="184.2" r="2.1" fill="#6f6f6f"/>
 <path d="M69 180.8L72.8 177.1H82.9L79.6 180.8Z" fill="#8fcaf6"/>
 <path d="M69 180.8H79.6V191H69Z" fill="#68ade6"/>
 <path d="M79.6 180.8L82.9 177.1V187.5L79.6 191Z" fill="#3f88c4"/>
 <path d="M69 180.8L72.8 177.1H82.9V187.5L79.6 191H69Z M69 180.8H79.6V191 M79.6 180.8L82.9 177.1" fill="none" stroke="#3a7fc0" stroke-width="0.6"/>
 <circle cx="165.3" cy="184.3" r="5.8" fill="#fff" stroke="#333" stroke-width="1.1"/>
 <circle cx="165.3" cy="184.3" r="2.2" fill="#222"/>
 <!-- gear row2 -->
 <g transform="translate(68.9 208.3)">
  <circle r="5.5" fill="#7a7a7a"/>
  <g fill="#7a7a7a"><rect x="-1.9" y="-7.9" width="3.8" height="15.8"/><rect x="-1.9" y="-7.9" width="3.8" height="15.8" transform="rotate(60)"/><rect x="-1.9" y="-7.9" width="3.8" height="15.8" transform="rotate(120)"/></g>
  <circle r="2.8" fill="#f3f3f3"/>
 </g>
 <!-- folders -->
 <path d="M61.3 228.1h5.6v-2.6h-5.6z" fill="#cfcfcf"/>
 <path d="M61.3 225.5h5.6l1.6 1.6h6.8v10.2h-14z M61.3 228.1h5.6" fill="none" stroke="#555" stroke-width="1.15"/>
 <path d="M86.7 252.1h5.6v-2.6h-5.6z" fill="#cfcfcf"/>
 <path d="M86.7 249.5h5.6l1.6 1.6h6.8v10.2h-14z M86.7 252.1h5.6" fill="none" stroke="#555" stroke-width="1.15"/>
 <path d="M86.7 276.20000000000005h5.6v-2.6h-5.6z" fill="#cfcfcf"/>
 <path d="M86.7 273.6h5.6l1.6 1.6h6.8v10.2h-14z M86.7 276.20000000000005h5.6" fill="none" stroke="#555" stroke-width="1.15"/>
 <path d="M86.7 300.20000000000005h5.6v-2.6h-5.6z" fill="#cfcfcf"/>
 <path d="M86.7 297.6h5.6l1.6 1.6h6.8v10.2h-14z M86.7 300.20000000000005h5.6" fill="none" stroke="#555" stroke-width="1.15"/>
 <!-- eye-slash row4 -->
 <path d="M61.2 256.2c2.5-3.2 5.1-4.6 7.8-4.6s5.3 1.4 7.8 4.6c-2.5 3.2-5.1 4.6-7.8 4.6s-5.3-1.4-7.8-4.6z" fill="none" stroke="#7a7a7a" stroke-width="1.2"/>
 <circle cx="69" cy="256.2" r="2.3" fill="none" stroke="#7a7a7a" stroke-width="1.2"/>
 <path d="M62.8 250.6l12.6 11.4" stroke="#f3f3f3" stroke-width="2.4"/>
 <path d="M62.8 250.6l12.6 11.4" stroke="#7a7a7a" stroke-width="1.2"/>
 <!-- eyes rows5,6 -->
 <path d="M61 280c2.5-3.3 5.2-4.8 8-4.8s5.5 1.5 8 4.8c-2.5 3.3-5.2 4.8-8 4.8s-5.5-1.5-8-4.8z" fill="#6f6f6f"/>
 <circle cx="69" cy="280" r="3.5" fill="#f3f3f3"/><circle cx="69" cy="280" r="2.1" fill="#6f6f6f"/>
 <path d="M61 304c2.5-3.3 5.2-4.8 8-4.8s5.5 1.5 8 4.8c-2.5 3.3-5.2 4.8-8 4.8s-5.5-1.5-8-4.8z" fill="#6f6f6f"/>
 <circle cx="69" cy="304" r="3.5" fill="#f3f3f3"/><circle cx="69" cy="304" r="2.1" fill="#6f6f6f"/>
 <!-- wavy underline -->
 <path d="M83.0 287.4l3.2-2.9M89.2 287.4l3.2-2.9M95.4 287.4l3.2-2.9M101.6 287.4l3.2-2.9M107.8 287.4l3.2-2.9M114.0 287.4l3.2-2.9M120.2 287.4l3.2-2.9M126.4 287.4l3.2-2.9M132.6 287.4l3.2-2.9M138.8 287.4l3.2-2.9M145.0 287.4l3.2-2.9M151.2 287.4l3.2-2.9" fill="none" stroke="#1a96d8" stroke-width="1.9"/>
</svg>
<div class="t" style="left:98.3px;top:177.5px;color:#222;transform:scaleX(0.9091)">(未保存)</div>
<div class="t" style="left:91.3px;top:201.5px;color:#2a2a2a;font-size:11.5px;transform:scaleX(0.7130)">ドキュメントの設定</div>
<div class="t" style="left:91.3px;top:225.5px;color:#2a2a2a;font-size:11.5px;transform:scaleX(0.7454)">名前の付いたビュー</div>
<div class="t" style="left:116.3px;top:249.5px;color:#2a2a2a;font-size:11.5px;transform:scaleX(0.8625)">原点</div>
<div class="t" style="left:116px;top:273.5px;color:#2a2a2a;font-size:11.5px;transform:scaleX(0.6667)">ボディ</div>
<div class="t" style="left:116.3px;top:297.5px;color:#2a2a2a;font-size:11.5px;transform:scaleX(0.6333)">スケッチ</div>
<!-- COMMENT PANEL -->
<div class="a" style="left:4px;top:953px;width:300px;height:24.5px;background:#f3f3f3;border:1px solid #dcdcdc"></div>
<div class="t" style="left:32px;top:958.5px;color:#2a2a2a;transform:scaleX(0.6771)">コメント</div>
<svg style="left:0;top:0" width="320" height="1000">
 <path d="M287 961v8M283 965h8" stroke="#555" stroke-width="1.6"/>
</svg>
<!-- NAV BAR -->
<div class="a" style="left:841px;top:952.5px;width:238.5px;height:23px;background:#f3f3f3"></div>
<svg style="left:0;top:0" width="1100" height="1000">
 <g fill="#777">
  <path d="M866 962.5h6l-3 3.5z M978 962.5h6l-3 3.5z M1009.5 962.5h6l-3 3.5z M1042 962.5h6l-3 3.5z M1072 962.5h6l-3 3.5z"/>
 </g>
 <path d="M846.6 960.4l-2.4 2.4 2.4 2.7" fill="none" stroke="#333" stroke-width="1.1"/>
 <path d="M852 955.1c-2.2 1.5-3.6 4.5-3.6 7.7s1.4 6.2 3.6 7.8M852 955.1c1 0.3 2 1.2 2.5 2.3M852 970.6c1-0.3 2-1.2 2.5-2.3" fill="none" stroke="#333" stroke-width="1.1"/>
 <path d="M853.5 957.5l2.2-0.3-0.3 2.2z M853.5 968.2l2.2 0.3-0.3-2.2z" fill="#333"/>
 <path d="M856.8 959.7l2.7 3.1-7.5 3.1" fill="none" stroke="#333" stroke-width="1.1"/>
 <path d="M857 958.4l0.5 2.5-2.3-0.5z" fill="#333"/>
 <circle cx="852" cy="962.8" r="1.7" fill="#2a95e8"/>
 <path d="M879.7 960.9h13.6v9.2h-13.6z" fill="#e6e6e6" stroke="#555" stroke-width="1.1"/>
 <rect x="881.2" y="962.4" width="10.8" height="6.4" fill="#5aa5e0"/>
 <path d="M880.3 960.5l4.2-5 -0.3 4 M886 960l4.5-1.5 0.2 2" fill="none" stroke="#555" stroke-width="0.9"/>
 <path d="M908.5 963.5v-6.5a1.1 1.1 0 0 1 2.2 0v5.5v-6.8a1.1 1.1 0 0 1 2.2 0v6.8v-6a1.1 1.1 0 0 1 2.2 0v6.5l1.5-3a1.1 1.1 0 0 1 2 1l-2.8 6.5v3.8h-6.3l-4.5-4.8a1.2 1.2 0 0 1 1.7-1.6l1.8 1.6" fill="none" stroke="#7a7a7a" stroke-width="0.85" stroke-linejoin="round"/>
 <circle cx="935.2" cy="963.5" r="5.1" fill="#d8d8d8" stroke="#555" stroke-width="1"/>
 <path d="M939.4 967.9l3.6 3.5" stroke="#8a6030" stroke-width="1.6"/>
 <path d="M944.5 955.3v4.5M942.2 957.8h4.6M942.2 961.9h4.6" stroke="#666" stroke-width="1"/>
 <rect x="956.5" y="955.8" width="16" height="15.6" fill="none" stroke="#333" stroke-width="0.9" stroke-dasharray="1.6 1"/>
 <circle cx="963" cy="961.9" r="6.3" fill="#d8d8d8" stroke="#555" stroke-width="1.1"/>
 <path d="M968 967l4.4 4.6" stroke="#8a6030" stroke-width="1.6"/>
 <rect x="990.5" y="957.7" width="15" height="10.7" fill="#e0e0e0" stroke="#5a5a5a" stroke-width="1.1"/>
 <rect x="992.5" y="959.4" width="11" height="7.2" fill="#a8a8a8"/>
 <path d="M997.2 968.8v1.3M993.3 970.6h9.4" stroke="#5a5a5a" stroke-width="1.1"/>
 <rect x="1021.5" y="955.8" width="13.2" height="12.6" fill="#fff" stroke="#5a5a5a" stroke-width="1.3"/>
 <path d="M1025.9 955.8v12.6M1030.3 955.8v12.6M1021.5 960h13.2M1021.5 964.2h13.2" stroke="#5a5a5a" stroke-width="1.3"/>
 <rect x="1052.6" y="956.6" width="14.6" height="12.5" fill="#f4f4f4" stroke="#5a5a5a" stroke-width="1.3"/>
 <path d="M1059.9 956.6v12.5M1052.6 962.85h14.6" stroke="#8a8a8a" stroke-width="1"/>
 <path d="M1054.2 958.3h4.2v3h-4.2zM1061.5 958.3h4.2v3h-4.2zM1054.2 964.5h4.2v3h-4.2zM1061.5 964.5h4.2v3h-4.2z" fill="none" stroke="#999" stroke-width="0.7"/>
</svg>
<!-- TIMELINE -->
<div id="timeline" class="a"></div>
<svg style="left:0;top:0" width="1920" height="1080">
 <g fill="#6b6b6b">
  <path d="M10.6 1001h2.2v11.6h-2.2z M22.1 1001v11.6l-8.6-5.8z"/>
  <path d="M35.4 1006.8l8.5-5.8v11.6z M44.8 1005h3v3.8h-3z"/>
  <path d="M61 1001v11.6l11.6-5.8z"/>
  <path d="M84.6 1005h3v3.8h-3z M88.6 1001v11.6l8.8-5.8z"/>
  <path d="M110.7 1001v11.6l8.6-5.8z M120 1001h2.2v11.6H120z"/>
 </g>
 <!-- features -->
 <g id="sk">
  <path d="M148.4 999.5h9.8M147.5 1000.5v10.2M148.4 1011.5h5.5M159.5 1000.5v4.5" fill="none" stroke="#3a3a3a" stroke-width="1"/>
  <rect x="145.8" y="997.8" width="2.4" height="2.4" fill="#1e86d9"/><rect x="158.6" y="997.8" width="2.4" height="2.4" fill="#1e86d9"/><rect x="145.8" y="1010.2" width="2.4" height="2.4" fill="#1e86d9"/>
  <path d="M155.3 1010.8l5-4.8 2 2-5 4.8z" fill="#f5a50f"/>
  <path d="M160.3 1006l1-1 2 2-1 1z" fill="#ea3a3a"/>
  <path d="M155.3 1010.8l2 2-2.8 0.8z" fill="#555"/>
 </g>
 <use href="#sk" x="48"/>
 <use href="#sk" x="96"/>
 <g id="ex">
  <path d="M170 1000.5l2.8-2.4h8.9l-2.8 2.4z" fill="#8fcaf6"/>
  <path d="M170 1000.5h8.9v9.8h-8.9z" fill="#68ade6"/>
  <path d="M178.9 1000.5l2.8-2.4v9.6l-2.8 2.6z" fill="#3f88c4"/>
  <path d="M170 1011.2h8.9l2.8-2.4v2.4l-2.8 2.4h-8.9z" fill="#bdbdbd"/>
  <path d="M184.5 1000.2v10.6" stroke="#333" stroke-width="0.9"/><path d="M184.5 998.6l-1.7 2.7h3.4z" fill="#333"/>
 </g>
 <use href="#ex" x="48"/>
 <use href="#ex" x="96"/>
 <use href="#ex" x="120"/>
 <path d="M218.3 993.4l4.2-4.2M223.3 993.4l4.2-4.2M228.3 993.4l4.2-4.2" stroke="#7ec8ea" stroke-width="2.2"/>
 <path d="M155 1017.3v5.2h143.4v-5.2M178.9 1017.3v5.2M202.8 1017.3v5.2M226.7 1017.3v5.2M250.6 1017.3v5.2M274.5 1017.3v5.2" fill="none" stroke="#c2c2c2" stroke-width="1.4"/>
 <path d="M304 992h13.7v4.2l-6 4h-1.8l-5.9-4z" fill="#3a3a3a"/>
 <rect x="309.3" y="999" width="1.9" height="24.4" fill="#333"/>
 <!-- gear -->
 <g transform="translate(1898.9 1007)">
  <circle r="5.6" fill="#7d7d7d"/>
  <g fill="#7d7d7d"><rect x="-1.9" y="-7.9" width="3.8" height="15.8"/><rect x="-1.9" y="-7.9" width="3.8" height="15.8" transform="rotate(60)"/><rect x="-1.9" y="-7.9" width="3.8" height="15.8" transform="rotate(120)"/></g>
  <circle r="2.9" fill="#f4f4f4"/>
 </g>
</svg>
<!-- TASKBAR -->
<div id="taskbar" class="a"></div>
<div class="a" style="left:741.5px;top:1040.8px;width:218.5px;height:30.6px;border-radius:15.3px;background:#f4f5e8;border:1px solid #d5d9c4"></div>
<div class="a" style="left:1185.9px;top:1036.8px;width:38px;height:38.4px;border-radius:5px;background:rgba(255,255,255,0.5)"></div>
<svg style="left:0;top:0" width="1920" height="1080">
 <defs>
  <linearGradient id="win" gradientUnits="userSpaceOnUse" x1="705" y1="1045" x2="728" y2="1068"><stop offset="0" stop-color="#4fd0fb"/><stop offset="1" stop-color="#0566d2"/></linearGradient>
  <linearGradient id="cloud" x1="0" y1="0" x2="0" y2="1"><stop offset="0" stop-color="#f3f7ff"/><stop offset="1" stop-color="#98b9e6"/></linearGradient>
 </defs>
 <!-- weather -->
 <circle cx="38.5" cy="1052.5" r="4" fill="#f08a20"/>
 <path d="M23 1066c-3 0-4.2-2-4.2-4.2s1.6-3.8 4.2-3.8c0.8-3 3.5-5.5 7-5.5 3 0 5.2 1.5 6.2 3.5 3.5 0 6.5 2.5 6.5 5.2s-2.3 4.8-5.5 4.8z" fill="url(#cloud)"/>
 <circle cx="37.5" cy="1046" r="7.8" fill="#c42b1c"/>
 <text x="37.6" y="1049.8" font-size="10.5" fill="#fff" text-anchor="middle" font-family="Liberation Sans">9+</text>
 <!-- windows -->
 <g fill="url(#win)">
  <rect x="704.9" y="1045" width="11" height="11" rx="0.6"/><rect x="717" y="1045" width="11" height="11" rx="0.6"/>
  <rect x="704.9" y="1057.1" width="11" height="11" rx="0.6"/><rect x="717" y="1057.1" width="11" height="11" rx="0.6"/>
 </g>
 <circle cx="758.5" cy="1054.5" r="5.5" fill="none" stroke="#222" stroke-width="1.6"/>
 <path d="M762.5 1058.5l4.5 4.5" stroke="#222" stroke-width="1.8"/>
 <!-- travel emoji -->
 <g transform="rotate(17 922 1056)">
  <rect x="910" y="1048" width="24" height="12" rx="1" fill="#e9e4ec" stroke="#1f8fa8" stroke-width="1.2"/>
  <rect x="911" y="1045.5" width="23" height="3" fill="#20a2a8"/>
  <path d="M928 1052l3 3M931 1052l-3 3" stroke="#3a9fc0" stroke-width="1.2"/>
  <rect x="921" y="1055" width="4" height="2" fill="#fff"/>
 </g>
 <rect x="938" y="1048" width="13" height="18" rx="2" fill="#72cfc9"/>
 <path d="M941.5 1049v16M944.5 1049v16M947.5 1049v16" stroke="#5bb5b0" stroke-width="0.9"/>
 <path d="M941.5 1048v-3.5h7v3.5" fill="none" stroke="#777" stroke-width="1.2"/>
 <rect x="939.5" y="1066" width="2" height="1.6" fill="#666"/><rect x="947.5" y="1066" width="2" height="1.6" fill="#666"/>
 <!-- store -->
 <path d="M973.2 1048.5h22.7v15.5c0 2.5-1.5 3.8-4 3.8h-14.7c-2.5 0-4-1.3-4-3.8z" fill="#1a5db0"/>
 <path d="M973.2 1048.5h22.7v15.5c0 2.5-1.5 3.8-4 3.8h-14.7c-2.5 0-4-1.3-4-3.8z" fill="#0e3f86" opacity="0.35"/>
 <path d="M979 1049.5v-2.8c0-0.8 0.5-1.3 1.3-1.3h8.6c0.8 0 1.3 0.5 1.3 1.3v2.8" fill="none" stroke="#25b6f5" stroke-width="1.6"/>
 <rect x="980" y="1052.2" width="3.8" height="3.8" fill="#f35325"/><rect x="985.2" y="1052.2" width="3.8" height="3.8" fill="#81bc06"/>
 <rect x="980" y="1057.3" width="3.8" height="3.8" fill="#05a6f0"/><rect x="985.2" y="1057.3" width="3.8" height="3.8" fill="#ffba08"/>
 <!-- folder -->
 <path d="M1016.6 1046c0-0.6 0.4-1 1-1h7.5l2 2h13.7c0.6 0 1 0.4 1 1v19.5c0 0.6-0.4 1-1 1h-23.2c-0.6 0-1-0.4-1-1z" fill="#e5a91e"/>
 <path d="M1016.6 1051c0-0.6 0.4-1 1-1h23.2c0.6 0 1 0.4 1 1v16.5c0 0.6-0.4 1-1 1h-23.2c-0.6 0-1-0.4-1-1z" fill="#fcd04f"/>
 <rect x="1023.5" y="1060" width="11" height="3.5" rx="1" fill="#2b7ad8"/>
 <!-- edge -->
 <defs>
  <linearGradient id="edg" x1="0" y1="0" x2="1" y2="1"><stop offset="0" stop-color="#35c1f1"/><stop offset="0.6" stop-color="#3cd4a0"/><stop offset="1" stop-color="#7be36a"/></linearGradient>
  <linearGradient id="cop" x1="0" y1="0" x2="1" y2="1"><stop offset="0" stop-color="#1f9cf0"/><stop offset="0.5" stop-color="#2ec2a0"/><stop offset="1" stop-color="#f0c30f"/></linearGradient>
  <linearGradient id="cop2" x1="0" y1="0" x2="1" y2="1"><stop offset="0" stop-color="#b44de6"/><stop offset="1" stop-color="#f25a9a"/></linearGradient>
 </defs>
 <circle cx="1073" cy="1055.6" r="12" fill="url(#edg)"/>
 <path d="M1061.2 1057.5c0.5-5 4-8.5 8.5-8.5 4 0 7 2.8 7 6 0 1.5-1 2.5-2.5 2.5h-5c-1 0-1.5 0.8-1.5 1.6 0 3 3.5 5.8 8 5.8 2.5 0 4.5-0.8 6-2-1.8 4.2-6 7.2-10.8 7.2-5.5 0-9.7-5-9.7-12.6z" fill="#1565c0"/>
 <path d="M1061.2 1057.5c1-3.5 4-5.5 7.5-5.5" stroke="#0d47a1" stroke-width="1" fill="none" opacity="0.5"/>
 <!-- chrome -->
 <circle cx="1117" cy="1056" r="12" fill="#ea4335"/>
 <path d="M1117 1056l-10.4-6a12 12 0 0 0 5.2 16.8z" fill="#34a853"/>
 <path d="M1117 1056l-5.2 10.8a12 12 0 0 0 17.2-10.8z" fill="#fbbc04"/>
 <circle cx="1117" cy="1056" r="5.6" fill="#fff"/><circle cx="1117" cy="1056" r="4.4" fill="#4285f4"/>
 <circle cx="1125.9" cy="1046.7" r="8" fill="#e8407a"/>
 <text x="1125.9" y="1050.3" font-size="9.5" fill="#fff" text-anchor="middle" font-family="Liberation Sans">良</text>
 <rect x="1114.2" y="1072.5" width="5.6" height="2.6" rx="1.3" fill="#8a8a7a"/>
 <!-- m365 -->
 <path d="M1152 1058.5c-1.5 0-2.2-1.2-1.8-2.5l3.5-9.5c0.8-2 2.3-3 4.3-3h8.5c-1.8 0-3 1-3.6 2.8l-3.8 10.2c-0.6 1.3-1.6 2-3 2z" fill="url(#cop)"/>
 <path d="M1174.5 1050c1.5 0 2.3 1.2 1.8 2.5l-3.3 7.5c-0.8 2-2.3 3-4.3 3h-8c1.8 0 3-1 3.6-2.8l3.5-8.2c0.6-1.3 1.6-2 3-2z" fill="url(#cop2)"/>
 <path d="M1163.2 1043.5h1.5c2 0 3.3 1.2 4 3l1.5 3.5h-4.5z" fill="#1f5fd6"/>
 <rect x="1154" y="1060.7" width="18.8" height="7" rx="1" fill="#111"/>
 <text x="1163.4" y="1066.6" font-size="6.8" fill="#fff" text-anchor="middle" font-family="Liberation Sans" font-weight="bold">M365</text>
 <!-- fusion -->
 <path d="M1194 1046c0-1.2 0.9-2.2 2.2-2.2h17.5c1.2 0 2.2 1 2.2 2.2v15.5h-21.9z" fill="#f96b0b"/>
 <path d="M1194 1046c0-1.2 0.9-2.2 2.2-2.2h2l-1.8 2v15.7h-2.4z" fill="#fb9a4c"/>
 <path d="M1213.3 1043.8h0.4c1.2 0 2.2 1 2.2 2.2v15.5l-1.5 0z" fill="#c9500b"/>
 <path d="M1196.5 1061.2h19.4v5.5c0 0.6-0.4 1-1 1h-17.4c-0.6 0-1-0.4-1-1z" fill="#983a08"/>
 <text x="1205.8" y="1058" font-size="13" fill="#fff" text-anchor="middle" font-family="Liberation Sans" font-weight="bold">F</text>
 <text x="1206.2" y="1066.5" font-size="5.2" fill="#f3d0b8" text-anchor="middle" font-family="Liberation Sans" font-weight="bold">FUS</text>
 <rect x="1197.1" y="1072.6" width="15.5" height="2.2" rx="1.1" fill="#0f78d4"/>
 <!-- tray -->
 <path d="M1656.5 1059l5-5 5 5" fill="none" stroke="#222" stroke-width="1.3"/>
 <path d="M1688 1051l10 10M1698 1051l-10 10" stroke="#fff" stroke-width="1.6"/>
 <circle cx="1729.5" cy="1055.3" r="6.8" fill="#1a6fd8"/>
 <circle cx="1734.5" cy="1058.5" r="2.8" fill="#e53935"/><circle cx="1733.3" cy="1061" r="1.5" fill="#ffc107"/>
 <path d="M1761.5 1049.5h13.5v10h-13.5z M1765 1063.5h7M1768.2 1059.5v4" fill="none" stroke="#222" stroke-width="1.1"/>
 <path d="M1773 1048.5h3.5v5h-3.5z M1774.7 1053.5v10" fill="#dde4c4" stroke="#222" stroke-width="1"/>
 <path d="M1785.5 1053h3l4-3.5v13l-4-3.5h-3z" fill="none" stroke="#222" stroke-width="1.1"/>
 <path d="M1795 1053a4 4 0 0 1 0 6M1797.5 1051a7 7 0 0 1 0 10M1800 1049a10 10 0 0 1 0 14" fill="none" stroke="#222" stroke-width="1"/>
</svg>
<div class="t" style="left:50px;top:1041px;color:#1a1a1a;font-size:11.5px;transform:scaleX(0.9579)">6°C</div>
<div class="t" style="left:50px;top:1056.5px;color:#444;font-size:11.5px;transform:scaleX(0.7798)">くもりのち晴れ</div>
<div class="t" style="left:777.5px;top:1048px;color:#5e5e5e;font-size:12.5px;transform:scaleX(1.0769)">検索</div>
<div class="t" style="left:1873px;top:1040.5px;color:#1a1a1a;font-size:11.5px;transform:scaleX(0.9555)">10:38</div>
<div class="t" style="left:1817.7px;top:1057px;color:#1a1a1a;font-size:11.5px;transform:scaleX(1.0321)">2026/01/13 (火)</div>
</body></html>
